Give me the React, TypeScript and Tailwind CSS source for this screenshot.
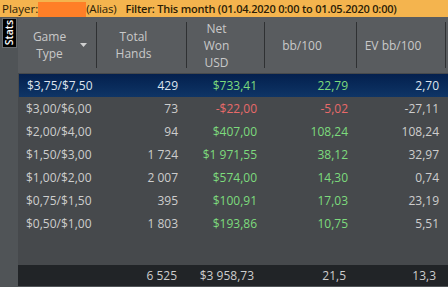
import React from "react";

type Row = { g: string; h: string; n: string; nc: "g" | "r"; b: string; bc: "g" | "r"; e: string };

const rows: Row[] = [
  { g: "$3,75/$7,50", h: "429", n: "$733,41", nc: "g", b: "22,79", bc: "g", e: "2,70" },
  { g: "$3,00/$6,00", h: "73", n: "-$22,00", nc: "r", b: "-5,02", bc: "r", e: "-27,11" },
  { g: "$2,00/$4,00", h: "94", n: "$407,00", nc: "g", b: "108,24", bc: "g", e: "108,24" },
  { g: "$1,50/$3,00", h: "1 724", n: "$1 971,55", nc: "g", b: "38,12", bc: "g", e: "32,97" },
  { g: "$1,00/$2,00", h: "2 007", n: "$574,00", nc: "g", b: "14,30", bc: "g", e: "0,74" },
  { g: "$0,75/$1,50", h: "395", n: "$100,91", nc: "g", b: "17,03", bc: "g", e: "23,19" },
  { g: "$0,50/$1,00", h: "1 803", n: "$193,86", nc: "g", b: "10,75", bc: "g", e: "5,51" },
];

const font = { fontFamily: '"Open Sans", "Noto Sans", sans-serif' };

export default function App() {
  return (
    <div
      className="w-[448px] h-[287px] overflow-hidden flex flex-col bg-[#505457] text-[12px]"
      style={font}
    >
      <div className="h-[17px] bg-[#f4b44e] flex items-center text-[11.5px] text-[#2b1d06] whitespace-nowrap leading-none">
        <span className="pl-[2px]">Player:</span>
        <span className="inline-block w-[48px] h-[15px] bg-[#ff7f27] mt-[2px]" />
        <span className="tracking-[-0.2px]">(Alias)</span>
        <span className="ml-[9px] font-semibold text-[11px] tracking-[-0.2px]">
          Filter: This month (01.04.2020 0:00 to 01.05.2020 0:00)
        </span>
      </div>
      <div className="flex flex-1">
        <div className="w-[18px] bg-[#505457] pt-[1px] pl-[2px]">
          <div className="w-[15px] h-[30px] bg-black border border-[#6a6d70] flex items-center justify-center">
            <span className="[writing-mode:vertical-rl] rotate-180 text-white text-[10.5px] font-semibold leading-none">
              Stats
            </span>
          </div>
        </div>
        <div className="flex-1 flex flex-col bg-[#46494c]">
          <div className="h-[56px] bg-[#595c5f] flex text-[#c9c9c9] leading-[17px] text-center">
            <div className="w-[79px] my-[5px] border-r border-[#2f3133] flex items-center justify-center pr-[15px] relative">
              <span>Game<br />Type</span>
              <svg className="absolute right-[9px] top-[21px]" width="7" height="4" viewBox="0 0 7 4">
                <path d="M0 0 H7 L3.5 4 Z" fill="#d0d0d0" />
              </svg>
            </div>
            <div className="w-[90px] my-[5px] border-r border-[#2f3133] flex items-center justify-center pr-[16px]">
              <span>Total<br />Hands</span>
            </div>
            <div className="w-[78px] my-[5px] border-r border-[#2f3133] flex items-center justify-center pr-[18px]">
              <span>Net<br />Won<br />USD</span>
            </div>
            <div className="w-[92px] my-[5px] border-r border-[#2f3133] flex items-center justify-center pr-[17px]">
              <span>bb/100</span>
            </div>
            <div className="w-[89px] my-[5px] border-r border-[#2f3133] flex items-center justify-center pr-[16px]">
              <span>EV bb/100</span>
            </div>
          </div>
          <div className="flex-1 flex flex-col pt-[1px]">
            {rows.map((r, i) => (
              <div
                key={i}
                className={
                  "h-[23px] flex items-center whitespace-nowrap " +
                  (i === 0
                    ? "bg-gradient-to-b from-[#04204e] to-[#0f3566] text-[#dde4ee] ml-[1px]"
                    : "text-[#cdcdcd]")
                }
              >
                <div className={"pl-[8px] " + (i === 0 ? "w-[78px]" : "w-[79px]")}>{r.g}</div>
                <div className="w-[90px] text-right pr-[9px]">{r.h}</div>
                <div className={"w-[78px] text-right pr-[8px] " + (r.nc === "g" ? "text-[#7ddb7d]" : "text-[#e86a6a]")}>
                  {r.n}
                </div>
                <div className={"w-[92px] text-right pr-[9px] " + (r.bc === "g" ? "text-[#7ddb7d]" : "text-[#e86a6a]")}>
                  {r.b}
                </div>
                <div className="w-[89px] text-right pr-[7px]">{r.e}</div>
              </div>
            ))}
          </div>
          <div className="h-[22px] bg-[#212427] border-b border-[#505457] flex items-center text-[#cdcdcd] whitespace-nowrap">
            <div className="w-[79px]" />
            <div className="w-[90px] text-right pr-[10px]">6 525</div>
            <div className="w-[78px] text-right pr-[11px]">$3 958,73</div>
            <div className="w-[92px] text-right pr-[11px]">21,5</div>
            <div className="w-[89px] text-right pr-[10px]">13,3</div>
          </div>
        </div>
      </div>
    </div>
  );
}
